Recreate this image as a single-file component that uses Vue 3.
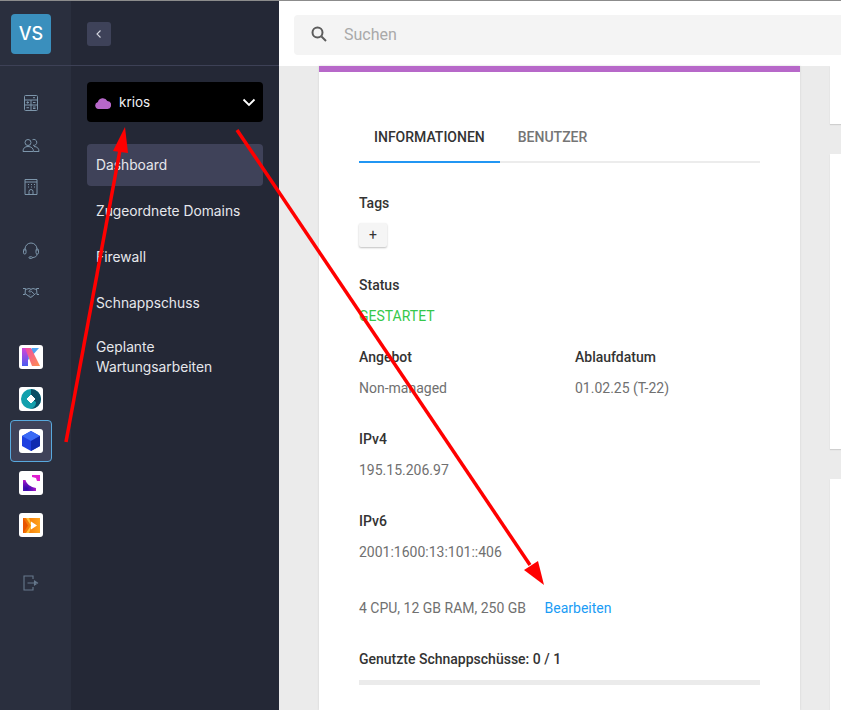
<template>
  <div class="page">
    <aside class="rail">
      <div class="railTop">
        <div class="avatar">VS</div>
      </div>
      <div class="railGroup first">
        <button class="railIcon" v-for="icon in mainIcons" :key="icon.name" :aria-label="icon.name">
          <svg width="18" height="18" viewBox="0 0 18 18" fill="none" stroke="#7d96ab" stroke-width="1">
            <path v-for="d in icon.paths" :key="d" :d="d" />
          </svg>
        </button>
      </div>
      <div class="railGroup support">
        <button class="railIcon tight" aria-label="Support">
          <svg width="18" height="18" viewBox="0 0 18 18" fill="none" stroke="#7d96ab" stroke-width="1">
            <path d="M3 9V7a6 6 0 0 1 12 0v2" />
            <rect x="1.500" y="7" width="2.500" height="5" rx="1.200" />
            <rect x="14" y="7" width="2.500" height="5" rx="1.200" />
            <path d="M15 12c0 2.500-2 3.500-4.500 3.500" />
            <rect x="7" y="14.800" width="3.500" height="1.600" rx=".8" />
          </svg>
        </button>
        <button class="railIcon tight" aria-label="Partner">
          <svg width="18" height="18" viewBox="0 0 18 18" fill="none" stroke="#7d96ab" stroke-width="1">
            <path d="M1 5.500h2.500l-.5 6H1M17 5.500h-2.500l.5 6h2" />
            <path d="M3.500 6.500 7 5.500l2 .8 2-.8 3.500 1M3 10.500l5.500 4 1.200-.6 4-3.400" />
            <path d="M9 6.300 6.800 8.500c.9.7 1.700.5 2.500-.2l3.200 3M7 12.500l1-1M8.800 13.700l1-1" />
          </svg>
        </button>
      </div>
      <div class="railGroup apps">
        <button class="appSlot" v-for="app in apps" :key="app.name" :class="{ selected: app.selected }" :aria-label="app.name">
          <span class="appTile">
            <svg v-if="app.name === 'k'" width="18" height="18" viewBox="0 0 18 18">
              <defs>
                <linearGradient id="kBar" x1="0" y1="0" x2="0" y2="1">
                  <stop offset="0" stop-color="#d445d8" />
                  <stop offset="1" stop-color="#4a5cf0" />
                </linearGradient>
                <linearGradient id="kLeg" x1="0" y1="0" x2="1" y2="1">
                  <stop offset="0" stop-color="#f04aa8" />
                  <stop offset="1" stop-color="#ff9050" />
                </linearGradient>
              </defs>
              <path d="M0 0h6v18H0z" fill="url(#kBar)" />
              <path d="M9 9l8-9h-7L6 5v7z" fill="#4fa4f2" />
              <path d="M3 0h6l9 18H10z" fill="url(#kLeg)" />
            </svg>
            <svg v-else-if="app.name === 'disk'" width="20" height="20" viewBox="0 0 20 20">
              <circle cx="10" cy="10" r="10" fill="#12a0ad" />
              <path d="M10 0a10 10 0 0 1 0 20c4-2 5-4 5-7l-5-3z" fill="#0b4f66" />
              <path d="M10 6l4 4-4 4-4-4z" fill="#fff" stroke="#fff" stroke-linejoin="round" />
            </svg>
            <svg v-else-if="app.name === 'cube'" width="18" height="20" viewBox="0 0 18 20">
              <path d="M9 0l9 5v10l-9 5-9-5V5z" fill="#1e40e0" />
              <path d="M9 0l9 5-9 5-9-5z" fill="#3a6af5" />
              <path d="M9 10l9-5v10l-9 5z" fill="#0f2bb0" />
            </svg>
            <svg v-else-if="app.name === 'corner'" width="17" height="16" viewBox="0 0 17 16">
              <defs>
                <radialGradient id="cA" cx=".25" cy=".8" r=".95">
                  <stop offset="0" stop-color="#2a0ca8" />
                  <stop offset=".55" stop-color="#7a12c0" />
                  <stop offset="1" stop-color="#e01ed0" />
                </radialGradient>
              </defs>
              <path d="M0 5h2.500c1 4 5 7 10.500 8v3H0z" fill="url(#cA)" />
              <path d="M9 0h8v6h-3l-1-3-4-1z" fill="#e01ed0" />
            </svg>
            <svg v-else width="17" height="15" viewBox="0 0 17 15">
              <defs>
                <linearGradient id="pA" x1="0" y1="0" x2="1" y2="0">
                  <stop offset="0" stop-color="#f06a00" />
                  <stop offset="1" stop-color="#ffa51f" />
                </linearGradient>
              </defs>
              <rect width="17" height="15" fill="url(#pA)" />
              <path d="M0 0l5 7.500L0 15z" fill="#e85400" />
              <path d="M3 0l5 7.500L3 15h3l3-7.500L6 0z" fill="#ffc23a" />
              <path d="M8 3.500l6 4-6 4z" fill="#fff" />
            </svg>
          </span>
        </button>
      </div>
      <button class="railIcon logout" aria-label="Abmelden">
        <svg width="18" height="18" viewBox="0 0 18 18" fill="none" stroke="#66788c" stroke-width="1.100">
          <path d="M11 5V2H2v14h9v-3" />
          <path d="M5.500 9H14M12.500 7l3 2-3 2z" />
        </svg>
      </button>
    </aside>

    <nav class="panel">
      <div class="panelTop">
        <button class="backBtn" aria-label="Einklappen">
          <svg width="10" height="10" viewBox="0 0 10 10" fill="none" stroke="#d4d6e0" stroke-width="1.100">
            <path d="M6.500 1.500 3 5l3.500 3.500" />
          </svg>
        </button>
      </div>
      <div class="serverSelect">
        <svg width="16" height="13" viewBox="0 0 16 13">
          <path d="M3.500 13a3.500 3.500 0 0 1-.6-6.900A5 5 0 0 1 12.300 5 4 4 0 0 1 12 13z" fill="#b768c9" />
        </svg>
        <span class="serverName">krios</span>
        <svg class="chevron" width="14" height="9" viewBox="0 0 14 9" fill="none" stroke="#fff" stroke-width="1.800">
          <path d="M1.500 1.500 7 7l5.500-5.500" />
        </svg>
      </div>
      <ul class="menu">
        <li
          v-for="item in menu"
          :key="item"
          :class="{ active: item === 'Dashboard', twoLine: item.length > 20 }">
          {{ item }}
        </li>
      </ul>
    </nav>

    <div class="main">
      <header class="topbar">
        <div class="search">
          <svg width="16" height="16" viewBox="0 0 16 16" fill="none" stroke="#5c5c5c" stroke-width="2">
            <circle cx="6.500" cy="6.500" r="5" />
            <path d="m10.500 10.500 4.500 4.500" />
          </svg>
          <span class="placeholder">Suchen</span>
        </div>
      </header>
      <div class="content">
        <section class="card">
          <div class="cardBody">
            <div class="tabs">
              <span class="tab current">INFORMATIONEN</span>
              <span class="tab">BENUTZER</span>
            </div>

            <div class="label tagsLabel">Tags</div>
            <button class="addTag">+</button>

            <div class="label statusLabel">Status</div>
            <div class="value started">GESTARTET</div>

            <div class="twoCols">
              <div>
                <div class="label">Angebot</div>
                <div class="value">Non-managed</div>
              </div>
              <div>
                <div class="label">Ablaufdatum</div>
                <div class="value">01.02.25 (T-22)</div>
              </div>
            </div>

            <div class="label spaced">IPv4</div>
            <div class="value">195.15.206.97</div>

            <div class="label spaced">IPv6</div>
            <div class="value">2001:1600:13:101::406</div>

            <div class="specs">
              <span>4 CPU, 12 GB RAM, 250 GB</span>
              <a class="editLink">Bearbeiten</a>
            </div>

            <div class="label spaced">Genutzte Schnappschüsse: 0 / 1</div>
            <div class="usage"></div>
          </div>
        </section>
        <div class="sideCards">
          <div class="sideCard one"></div>
          <div class="sideCard two"></div>
          <div class="sideCard three"></div>
        </div>
      </div>
    </div>

    <svg class="arrows" width="841" height="710" viewBox="0 0 841 710">
      <path d="M66 442 120 150" stroke="#ff0000" stroke-width="3.500" fill="none" />
      <path d="M125 127 128 153 113 151z" fill="#ff0000" />
      <path d="M237 130 530 565" stroke="#ff0000" stroke-width="3.500" fill="none" />
      <path d="M544 585 524 570 538 561z" fill="#ff0000" />
    </svg>
  </div>
</template>

<script setup>
const mainIcons = [
  {
    name: "Rechner",
    paths: [
      "M3.500 1.500h11a1 1 0 0 1 1 1v13a1 1 0 0 1-1 1h-11a1 1 0 0 1-1-1v-13a1 1 0 0 1 1-1z",
      "M2.500 6h13M2.500 11h13M9 6v10.500M11 3.700h2",
      "M4.500 8.500h2.500M5.700 7.300v2.400M4.500 13.700h2.500M11 8.500h2.500M11 13h2.500M11 14.500h2.500",
    ],
  },
  {
    name: "Benutzer",
    paths: [
      "M6 9.500a3 3 0 1 0 0-6 3 3 0 0 0 0 6z",
      "M10.500 3.700a3 3 0 1 1 .5 5.600",
      "M1 15.500c0-3.500 2-5 5-5s5.500 1.500 5.500 5z",
      "M12 10.500c3 0 5 1.800 5 5h-5",
    ],
  },
  {
    name: "Firma",
    paths: [
      "M3 1.500h12v15H3z",
      "M3 4h12",
      "M6 6.500h1M9 6.500h1M12 6.500h1M6 9h1M9 9h1M12 9h1",
      "M7 16.500v-3a2 2 0 0 1 4 0v3",
    ],
  },
];

const apps = [
  { name: "k" },
  { name: "disk" },
  { name: "cube", selected: true },
  { name: "corner" },
  { name: "play" },
];

const menu = [
  "Dashboard",
  "Zugeordnete Domains",
  "Firewall",
  "Schnappschuss",
  "Geplante Wartungsarbeiten",
];
</script>

<style>
body {
  background: #ebebeb;
  overflow: hidden;
}
</style>

<style scoped>
.page {
  position: relative;
  display: flex;
  width: 841px;
  height: 710px;
  overflow: hidden;
  border-top: 1px solid #8c8c8c;
  box-sizing: border-box;
  font-family: Roboto, sans-serif;
}

/* icon rail */
.rail {
  width: 71px;
  flex: none;
  background: #2a2f3e;
  display: flex;
  flex-direction: column;
  align-items: center;
  padding-right: 9px;
  box-sizing: border-box;
}
.railTop {
  width: 71px;
  margin-right: -9px;
  padding-right: 9px;
  height: 65px;
  flex: none;
  border-bottom: 1px solid #3d4156;
  box-sizing: border-box;
  display: flex;
  justify-content: center;
  padding-top: 13px;
}
.avatar {
  width: 40px;
  height: 40px;
  background: #3a8fbd;
  border-radius: 4px;
  color: #fff;
  font: 500 18px/40px Inter, sans-serif;
  text-align: center;
}
.railGroup {
  display: flex;
  flex-direction: column;
  align-items: center;
}
.railGroup.first {
  margin-top: 28px;
  gap: 24px;
}
.railGroup.support {
  margin-top: 46px;
  gap: 23px;
}
.railGroup.apps {
  margin-top: 35px;
}
button {
  border: 0;
  padding: 0;
  background: none;
  display: flex;
  align-items: center;
  justify-content: center;
}
.railIcon {
  width: 18px;
  height: 18px;
}
.appSlot {
  width: 42px;
  height: 42px;
  box-sizing: border-box;
  border-radius: 4px;
  border: 1px solid transparent;
}
.appSlot.selected {
  background: #3f4259;
  border-color: #58a9de;
}
.appTile {
  width: 24px;
  height: 24px;
  background: #fff;
  border-radius: 3px;
  display: flex;
  align-items: center;
  justify-content: center;
}
.logout {
  margin-top: 28px;
}

/* second column */
.panel {
  width: 208px;
  flex: none;
  background: #242836;
}
.panelTop {
  height: 65px;
  border-bottom: 1px solid #3d4156;
  box-sizing: border-box;
  padding: 21px 0 0 16px;
}
.backBtn {
  width: 24px;
  height: 24px;
  background: #3e4259;
  border-radius: 3px;
}
.serverSelect {
  margin: 16px 16px 0;
  height: 40px;
  background: #000;
  border-radius: 4px;
  display: flex;
  align-items: center;
  padding: 0 7px 0 8px;
  color: #f0f0f4;
  font: 400 13.5px/38px Inter, sans-serif;
}
.serverName {
  margin-left: 8px;
}
.chevron {
  margin-left: auto;
}
.menu {
  list-style: none;
  margin: 22px 16px 0;
  padding: 0;
  display: flex;
  flex-direction: column;
  gap: 4px;
}
.menu li {
  padding: 11px 9px;
  border-radius: 4px;
  color: #e6e7ec;
  font: 400 13.8px/20px Inter, sans-serif;
}
.menu li.active {
  background: #3f4259;
}
.menu li.twoLine {
  margin-top: -2px;
}

/* page area */
.main {
  flex: 1;
  min-width: 0;
  display: flex;
  flex-direction: column;
}
.topbar {
  height: 65px;
  flex: none;
  background: #fff;
  padding: 14px 0 0 15px;
  box-sizing: border-box;
  overflow: hidden;
}
.search {
  width: 600px;
  height: 40px;
  background: #f4f4f4;
  border-radius: 4px;
  display: flex;
  align-items: center;
  padding: 0 0 3px 17px;
  box-sizing: border-box;
  gap: 17px;
}
.placeholder {
  color: #a9a9a9;
  font-size: 16px;
  line-height: 20px;
  margin-top: 3px;
}
.content {
  flex: 1;
  display: flex;
  gap: 30px;
  padding-left: 40px;
  background: #ebebeb;
}
.card {
  width: 481px;
  flex: none;
  background: #fff;
  border-top: 6px solid #b768c9;
  box-shadow: 0 0 2px #cfcfcf;
  box-sizing: border-box;
}
.cardBody {
  padding: 54px 40px 0;
}
.tabs {
  display: flex;
  height: 35px;
  border-bottom: 2px solid #ececec;
}
.tab {
  padding: 1px 15px 0 18px;
  height: 37px;
  color: #757575;
  font-size: 14px;
  font-weight: 500;
  line-height: 20px;
  box-sizing: border-box;
}
.tab.current {
  padding: 1px 15px 0 15px;
  color: #333;
  border-bottom: 2px solid #2196f3;
}
.label {
  color: #333;
  font-size: 14px;
  font-weight: 500;
  line-height: 20px;
}
.value {
  margin-top: 11px;
  color: #707070;
  font-size: 14px;
  line-height: 20px;
}
.tagsLabel {
  margin-top: 30px;
}
.addTag {
  width: 28px;
  height: 24px;
  margin-top: 10px;
  background: #f5f5f5;
  border-radius: 2px;
  box-shadow: 0 1px 2px rgba(0, 0, 0, 0.25);
  color: #333;
  font: 400 14px Roboto, sans-serif;
}
.statusLabel {
  margin-top: 28px;
}
.value.started {
  color: #35c84a;
}
.twoCols {
  display: grid;
  grid-template-columns: 216px 1fr;
  margin-top: 21px;
}
.spaced {
  margin-top: 31px;
}
.specs {
  margin-top: 36px;
  display: flex;
  gap: 18.5px;
  color: #707070;
  font-size: 14px;
  line-height: 20px;
}
.editLink {
  color: #1a9cf5;
}
.usage {
  height: 5px;
  margin-top: 11px;
  background: #ebebeb;
}
.sideCards {
  display: flex;
  flex-direction: column;
  width: 40px;
  flex: none;
  gap: 30px;
}
.sideCard {
  background: #fff;
  box-shadow: 0 1px 1px #cfcfcf;
}
.sideCard.one {
  height: 58px;
}
.sideCard.two {
  height: 295px;
}
.sideCard.three {
  flex: 1;
}

/* annotations drawn on top of the screenshot */
.arrows {
  position: absolute;
  left: 0;
  top: -1px;
  pointer-events: none;
}
</style>
